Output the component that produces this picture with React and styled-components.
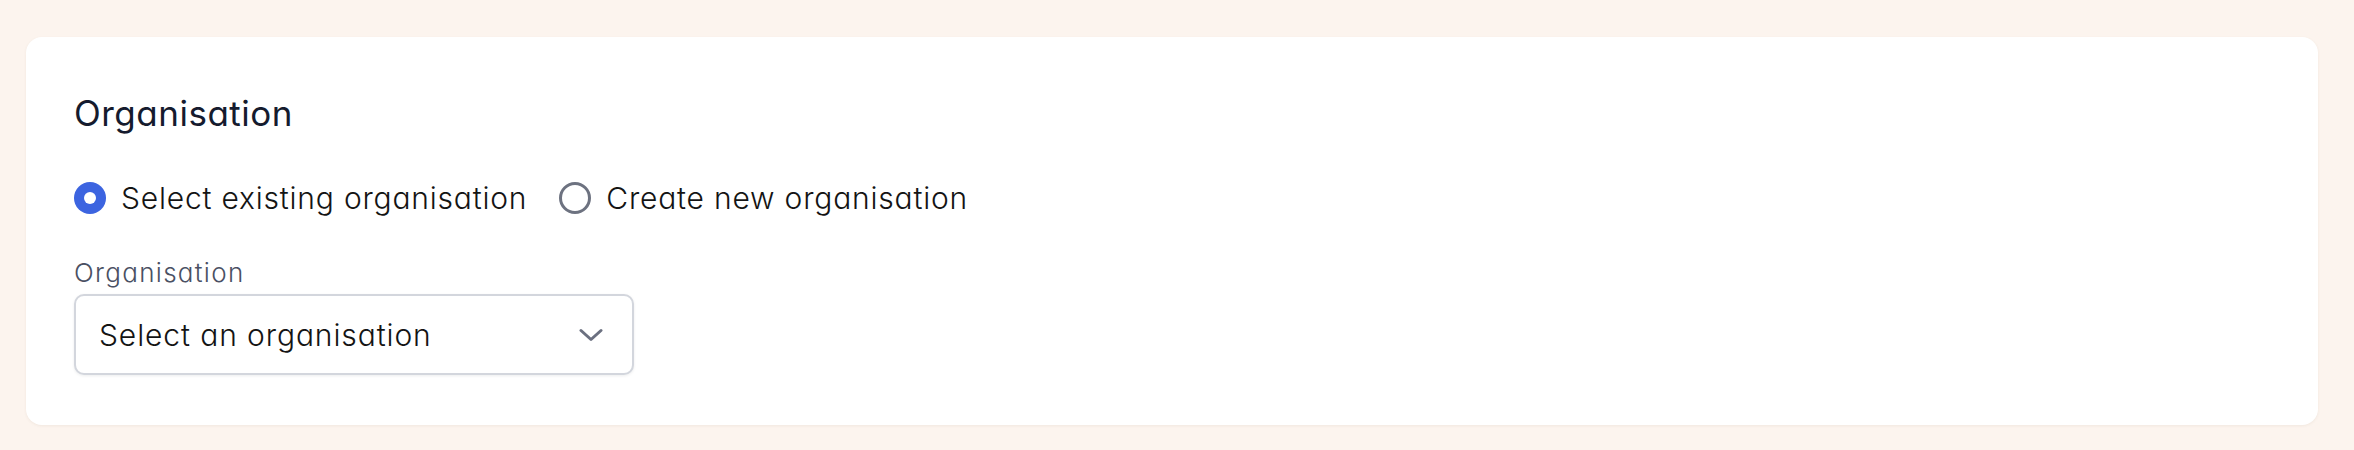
import React, { useState } from "react";
import styled, { createGlobalStyle } from "styled-components";

const GlobalStyle = createGlobalStyle`
  html, body {
    margin: 0;
    padding: 0;
    background: #fcf4ee;
  }
  * {
    box-sizing: border-box;
  }
`;

const Page = styled.div`
  padding: 37px 36px 25px 26px;
  font-family: "Inter", "Noto Sans", sans-serif;
  font-feature-settings: "cv11" 1;
`;

const Card = styled.section`
  background: #ffffff;
  border-radius: 16px;
  box-shadow: 0 1px 3px rgba(120, 90, 60, 0.08);
  padding: 50px 48px 50px 48px;
  height: 388px;
  display: flex;
  flex-direction: column;
`;

const Title = styled.h2`
  margin: 0;
  font-size: 35px;
  line-height: 52px;
  font-weight: 400;
  color: #151b2e;
  letter-spacing: 0.5px;
`;

const RadioGroup = styled.div`
  display: flex;
  align-items: center;
  gap: 32px;
  margin-top: 41px;
`;

const RadioOption = styled.label`
  display: flex;
  align-items: center;
  gap: 15px;
  cursor: pointer;
  font-size: 30px;
  line-height: 36px;
  color: #141414;
  letter-spacing: 0.8px;
  font-weight: 300;
`;

const RadioCircle = styled.span`
  width: 32px;
  height: 32px;
  border-radius: 50%;
  flex-shrink: 0;
  background: ${(p) => (p.checked ? "#3c64e0" : "#ffffff")};
  border: ${(p) => (p.checked ? "none" : "3px solid #6d7280")};
  display: flex;
  align-items: center;
  justify-content: center;

  &::after {
    content: "";
    width: 12px;
    height: 12px;
    border-radius: 50%;
    background: #ffffff;
    display: ${(p) => (p.checked ? "block" : "none")};
  }
`;

const Field = styled.div`
  display: flex;
  flex-direction: column;
  margin-top: 41px;
`;

const FieldLabel = styled.span`
  font-size: 26px;
  line-height: 32px;
  color: #4a5063;
  letter-spacing: 1.3px;
  font-weight: 300;
  margin-bottom: 5px;
`;

const SelectBox = styled.button`
  width: 560px;
  height: 81px;
  display: flex;
  align-items: center;
  justify-content: space-between;
  padding: 0 29px 0 23px;
  background: #ffffff;
  border: 2px solid #d3d6dd;
  border-radius: 10px;
  box-shadow: 0 1px 3px rgba(16, 24, 40, 0.08);
  font-family: inherit;
  font-feature-settings: "cv11" 1;
  font-size: 30px;
  font-weight: 300;
  color: #141414;
  letter-spacing: 0.9px;
  cursor: pointer;
  text-align: left;
`;

const Chevron = () => (
  <svg width="24" height="14" viewBox="0 0 24 14" fill="none">
    <path
      d="M2 2.5 L12 11.5 L22 2.5"
      stroke="#6b7080"
      strokeWidth="3"
      strokeLinecap="round"
      strokeLinejoin="round"
    />
  </svg>
);

export default function App() {
  const [mode, setMode] = useState("existing");

  return (
    <Page>
      <GlobalStyle />
      <Card>
        <Title>Organisation</Title>
        <RadioGroup>
          <RadioOption onClick={() => setMode("existing")}>
            <RadioCircle checked={mode === "existing"} />
            Select existing organisation
          </RadioOption>
          <RadioOption onClick={() => setMode("new")}>
            <RadioCircle checked={mode === "new"} />
            Create new organisation
          </RadioOption>
        </RadioGroup>
        <Field>
          <FieldLabel>Organisation</FieldLabel>
          <SelectBox type="button">
            <span>Select an organisation</span>
            <Chevron />
          </SelectBox>
        </Field>
      </Card>
    </Page>
  );
}
